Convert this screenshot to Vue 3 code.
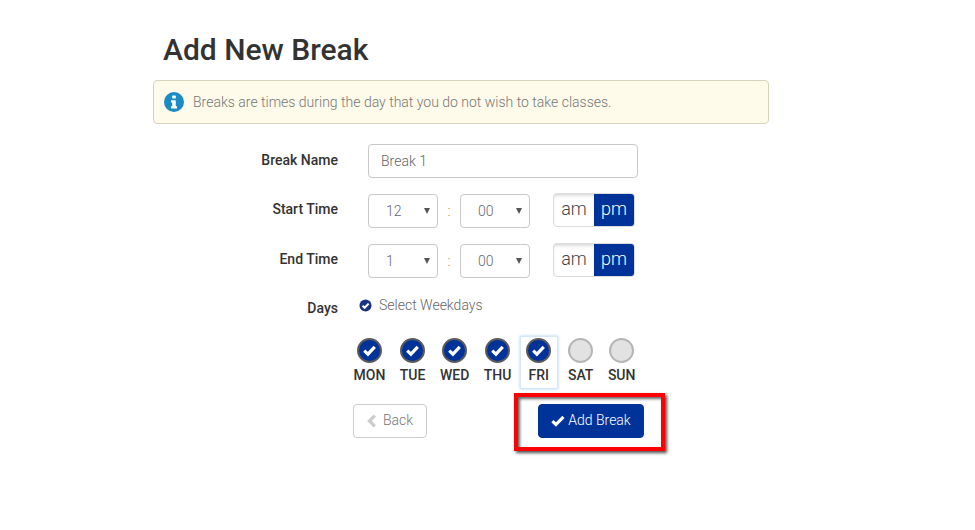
<script setup>
const days = [
  { name: 'MON', on: true },
  { name: 'TUE', on: true },
  { name: 'WED', on: true },
  { name: 'THU', on: true },
  { name: 'FRI', on: true, focus: true },
  { name: 'SAT', on: false },
  { name: 'SUN', on: false },
]
const times = [
  { label: 'Start Time', hour: '12', min: '00' },
  { label: 'End Time', hour: '1', min: '00' },
]
</script>

<template>
  <main class="page">
    <h1 class="title">Add New Break</h1>
    <div class="alert">
      <svg class="info" viewBox="0 0 20 20" width="20" height="20" aria-hidden="true">
        <circle cx="10" cy="10" r="10" fill="#1a8bc4" />
        <rect x="8.2" y="3.6" width="3.6" height="3" rx=".6" fill="#fff" />
        <path d="M7 8.2h4.8v6h1.2v2.2H7v-2.2h1.2v-3.8H7z" fill="#fff" />
      </svg>
      <span>Breaks are times during the day that you do not wish to take classes.</span>
    </div>

    <div class="row name-row">
      <label class="label">Break Name</label>
      <div class="input">Break 1</div>
    </div>

    <div v-for="t in times" :key="t.label" class="row time-row">
      <label class="label">{{ t.label }}</label>
      <div class="select"><span class="val">{{ t.hour }}</span><i class="arrow"></i></div>
      <span class="colon">:</span>
      <div class="select"><span class="val">{{ t.min }}</span><i class="arrow"></i></div>
      <div class="toggle">
        <span class="am">am</span>
        <span class="pm">pm</span>
      </div>
    </div>

    <div class="row days-row">
      <label class="label">Days</label>
      <div class="weekdays">
        <svg class="mini" viewBox="0 0 14 14" width="13" height="13" aria-hidden="true">
          <circle cx="7" cy="7" r="6.5" fill="#1c3480" />
          <path d="M3.8 7.2l2.3 2.3L10.4 5" fill="none" stroke="#fff" stroke-width="2.2" />
        </svg>
        <span>Select Weekdays</span>
      </div>
    </div>

    <div class="days">
      <div v-for="d in days" :key="d.name" class="day" :class="{ focus: d.focus }">
        <span class="circle" :class="{ on: d.on }">
          <svg v-if="d.on" viewBox="0 0 16 16" width="15" height="15" aria-hidden="true">
            <path d="M2.4 8.2l3.9 3.7 7.3-7.8" fill="none" stroke="#fff" stroke-width="3.4" />
          </svg>
        </span>
        <span class="day-name">{{ d.name }}</span>
      </div>
    </div>

    <div class="actions">
      <button class="btn back" type="button">
        <svg viewBox="0 0 10 14" width="10" height="14" aria-hidden="true">
          <path d="M7.8 1.6L2.4 7l5.4 5.4" fill="none" stroke="#ccc" stroke-width="3.2" />
        </svg>
        <span>Back</span>
      </button>
      <div class="add-wrap">
        <button class="btn add" type="button">
          <svg viewBox="0 0 16 16" width="14" height="14" aria-hidden="true">
            <path d="M1.6 8.2l4 3.8 8.6-8.8" fill="none" stroke="#fff" stroke-width="3.6" />
          </svg>
          <span>Add Break</span>
        </button>
        <div class="highlight"></div>
      </div>
    </div>
  </main>
</template>

<style>
html, body { background: #fff; }
</style>

<style scoped>
.page {
  box-sizing: border-box;
  width: 616px;
  height: 530px;
  margin-left: 153px;
  font-family: Roboto, "Liberation Sans", sans-serif;
  font-size: 14px;
  color: #333;
  overflow: visible;
}
.title {
  margin: 0;
  padding: 32px 0 0 10px;
  font-size: 30px;
  line-height: 36px;
  font-weight: 500;
  color: #333;
}
.alert {
  box-sizing: border-box;
  height: 44px;
  margin-top: 12px;
  padding-left: 10px;
  display: flex;
  align-items: center;
  gap: 9px;
  background: #fefbea;
  border: 1px solid #d6d3bd;
  border-radius: 4px;
  font-weight: 300;
  color: #777;
}
.row { display: flex; align-items: center; }
.label {
  width: 185px;
  flex: none;
  text-align: right;
  font-weight: 500;
  color: #333;
}
.name-row { margin-top: 20px; }
.name-row .label { transform: translateY(-1px); }
.input {
  box-sizing: border-box;
  width: 270px;
  height: 34px;
  margin-left: 30px;
  padding-left: 12px;
  line-height: 32px;
  border: 1px solid #c8c8c8;
  border-radius: 4px;
  font-weight: 300;
  color: #666;
}
.time-row { height: 34px; margin-top: 16px; }
.time-row .label { transform: translateY(-2px); }
.select {
  box-sizing: border-box;
  width: 70px;
  height: 34px;
  position: relative;
  padding-left: 17px;
  border: 1px solid #c8c8c8;
  border-radius: 4px;
  line-height: 32px;
  font-weight: 300;
  color: #667;
}
.label + .select { margin-left: 30px; }
.arrow {
  position: absolute;
  right: 7px;
  top: 13px;
  border-left: 3px solid transparent;
  border-right: 3px solid transparent;
  border-top: 6px solid #555;
}
.colon {
  width: 22px;
  text-align: center;
  color: #a08a60;
  font-weight: 300;
}
.toggle {
  display: flex;
  width: 82px;
  height: 34px;
  margin-left: 23px;
  transform: translateY(-1px);
  box-sizing: border-box;
  border: 1px solid #dcdcdc;
  border-radius: 4px;
  overflow: hidden;
  font-size: 18px;
  line-height: 29px;
  font-weight: 300;
  text-align: center;
}
.am {
  flex: 1;
  color: #444;
  box-shadow: inset 0 3px 4px -2px rgba(0, 0, 0, .2);
}
.pm { flex: 1; background: #00339a; color: #fff; }
.days-row { margin-top: 20px; height: 20px; }
.weekdays {
  display: flex;
  align-items: center;
  gap: 7px;
  margin-left: 21px;
  font-weight: 300;
  color: #666;
  transform: translateY(-3px);
}
.days {
  display: flex;
  margin-top: 18px;
  margin-left: 193.25px;
}
.day {
  box-sizing: border-box;
  height: 53px;
  padding: 2px 7.25px 0;
  display: flex;
  flex-direction: column;
  align-items: center;
}
.day.focus {
  padding: 2px 6.5px 0;
  margin: 0 3px 0 1px;
  box-shadow: inset 0 0 0 1px #d4e8fa, 0 0 3px #a9d3f5;
}
.circle {
  box-sizing: border-box;
  width: 25px;
  height: 25px;
  flex: none;
  display: flex;
  align-items: center;
  justify-content: center;
  border-radius: 50%;
  border: 2px solid #b5b5b5;
  background: #e2e2e2;
}
.circle.on {
  background: #00339a;
  border-color: #5a5a5a;
}
.day-name {
  margin-top: 3px;
  font-weight: 500;
  line-height: 18px;
  color: #333;
}
.actions {
  display: flex;
  margin-top: 15px;
  margin-left: 200px;
}
.btn {
  box-sizing: border-box;
  height: 34px;
  padding: 0 0 2px;
  display: flex;
  align-items: center;
  justify-content: center;
  font: inherit;
  border-radius: 4px;
}
.btn svg { transform: translateY(1px); }
.back {
  width: 74px;
  gap: 6px;
  background: #fff;
  border: 1px solid #ccc;
  color: #777;
  font-weight: 300;
}
.add-wrap { position: relative; margin-left: 111px; }
.add {
  width: 106px;
  gap: 3px;
  background: #00339a;
  border: 1px solid #00339a;
  color: #fff;
  font-weight: 300;
}
.highlight {
  position: absolute;
  inset: -11px -21px -13px -24px;
  border: 4px solid #f00;
  box-shadow: 2px 2px 3px rgba(0, 0, 0, .7), inset 2px 2px 3px rgba(0, 0, 0, .6);
  pointer-events: none;
}
</style>
